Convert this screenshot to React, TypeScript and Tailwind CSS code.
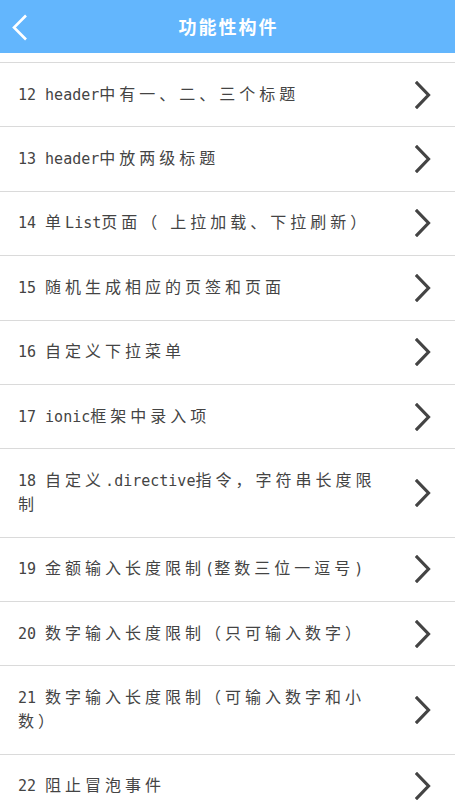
import React from "react";

const items: string[][] = [
  ["12 header中有一、二、三个标题"],
  ["13 header中放两级标题"],
  ["14 单List页面（ 上拉加载、下拉刷新）"],
  ["15 随机生成相应的页签和页面"],
  ["16 自定义下拉菜单"],
  ["17 ionic框架中录入项"],
  ["18 自定义.directive指令，字符串长度限", "制"],
  ["19 金额输入长度限制(整数三位一逗号)"],
  ["20 数字输入长度限制（只可输入数字）"],
  ["21 数字输入长度限制（可输入数字和小", "数）"],
  ["22 阻止冒泡事件"],
];

const cjk = /([\u3000-\u303f\u4e00-\u9fff\uff00-\uffef]+)/;

const Line = ({ text }: { text: string }) => {
  const parts = text.split(cjk).filter((p) => p.length > 0);
  return (
    <div className="whitespace-pre h-[24px] leading-[24px] overflow-visible">
      {parts.map((p, i) =>
        cjk.test(p) ? (
          <span key={i} className="text-[16px] tracking-[4px] leading-none">
            {p}
          </span>
        ) : (
          <span key={i} className="leading-none">{p}</span>
        )
      )}
    </div>
  );
};

const Chevron = () => (
  <svg width="16" height="28" viewBox="0 0 16 28" fill="none" className="shrink-0">
    <polyline
      points="2,2 13.5,14 2,26"
      stroke="#444"
      strokeWidth="3.2"
      strokeLinecap="square"
      strokeLinejoin="miter"
    />
  </svg>
);

const App = () => {
  return (
    <div className="h-screen w-full overflow-hidden bg-white flex flex-col">
      <div className="h-[53px] shrink-0 bg-[#63b6fd] flex items-center relative">
        <svg
          className="absolute left-[11px] top-[14px]"
          width="18"
          height="27"
          viewBox="0 0 18 27"
          fill="none"
        >
          <polyline
            points="15,1.5 3,13.5 15,25.5"
            stroke="#fff"
            strokeWidth="2.6"
          />
        </svg>
        <p
          className="w-full text-center text-white text-[18px] tracking-[2px] font-bold pl-[2px]"
          style={{ fontFamily: '"Noto Sans CJK SC", sans-serif' }}
        >
          功能性构件
        </p>
      </div>
      <div className="h-[10px] shrink-0 border-b border-[#dadada]" />
      <div
        className="flex flex-col text-[15px] text-[#444]"
        style={{ fontFamily: '"DejaVu Sans Mono", "Noto Sans CJK SC", monospace' }}
      >
        {items.map((lines, idx) => (
          <div
            key={idx}
            className="flex items-center justify-between border-b border-[#dadada] pl-[18px] pr-[24px] shrink-0"
          >
            <div className="py-[19.7px]">
              {lines.map((l, j) => (
                <Line key={j} text={l} />
              ))}
            </div>
            <Chevron />
          </div>
        ))}
      </div>
    </div>
  );
};

export default App;
